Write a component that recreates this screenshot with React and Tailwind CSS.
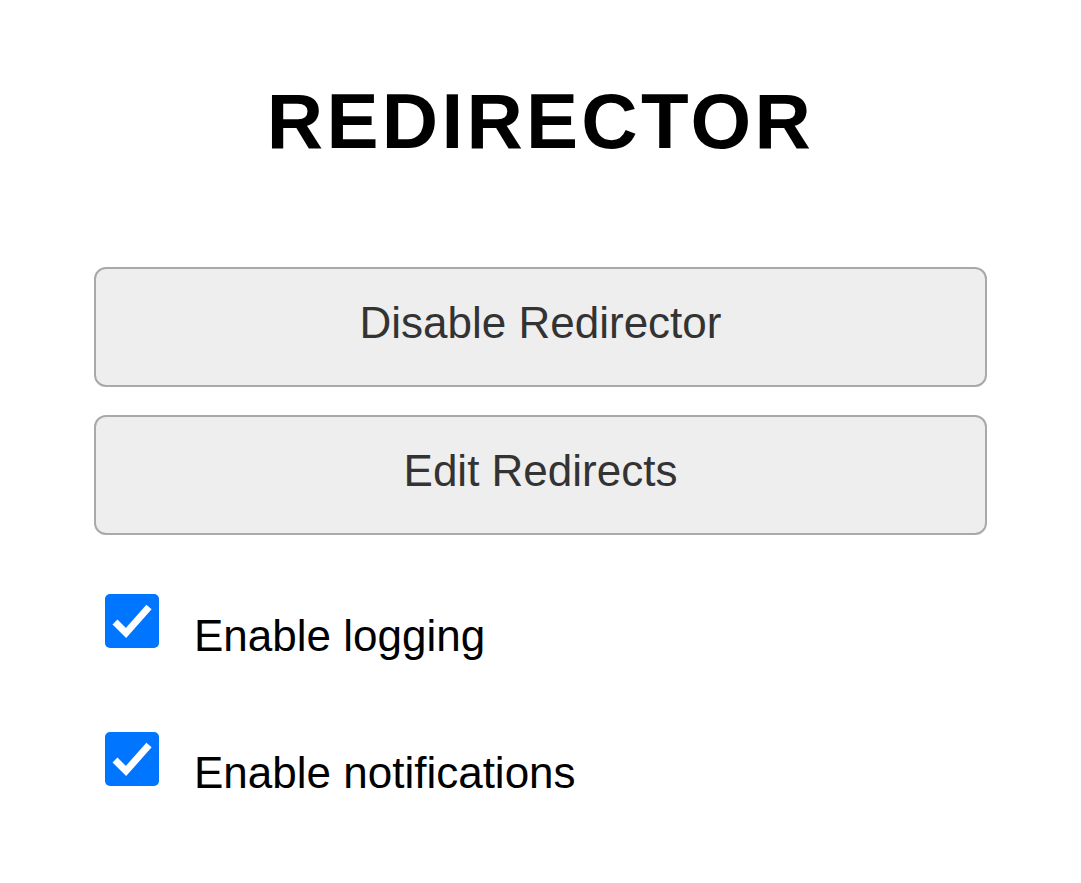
import React, { useState } from 'react';

const Check = ({ checked, onChange }) => (
  <button
    type="button"
    onClick={onChange}
    className={`w-[54px] h-[54px] rounded-[5px] flex-none flex items-center justify-center ${checked ? 'bg-[#0075ff]' : 'bg-white border-2 border-[#767676]'}`}
  >
    {checked && (
      <svg width="54" height="54" viewBox="0 0 54 54">
        <polyline points="10,28 21,39 44,13" fill="none" stroke="white" strokeWidth="7" />
      </svg>
    )}
  </button>
);

const App = () => {
  const [logging, setLogging] = useState(true);
  const [notify, setNotify] = useState(true);

  return (
    <div className="min-h-screen bg-white px-[94px] pt-[76px] font-['Liberation_Sans',Arial,sans-serif]">
      <h1 className="text-center text-[78px] leading-[90px] font-bold tracking-[3.3px] text-black">REDIRECTOR</h1>

      <div className="mt-[101px] flex flex-col gap-[28px]">
        <button className="h-[120px] w-full rounded-[12px] border-2 border-[#a9a9a9] bg-[#eee] pb-[8px] text-[44px] text-[#333]">
          Disable Redirector
        </button>
        <button className="h-[120px] w-full rounded-[12px] border-2 border-[#a9a9a9] bg-[#eee] pb-[8px] text-[44px] text-[#333]">
          Edit Redirects
        </button>
      </div>

      <div className="mt-[59px] flex flex-col gap-[71px] pl-[11px]">
        <label className="flex items-start gap-[35px]">
          <Check checked={logging} onChange={() => setLogging(!logging)} />
          <span className="mt-[17px] text-[44px] leading-[50px] text-black">Enable logging</span>
        </label>
        <label className="flex items-start gap-[35px]">
          <Check checked={notify} onChange={() => setNotify(!notify)} />
          <span className="mt-[16px] text-[44px] leading-[50px] text-black">Enable notifications</span>
        </label>
      </div>
    </div>
  );
};

export default App;
